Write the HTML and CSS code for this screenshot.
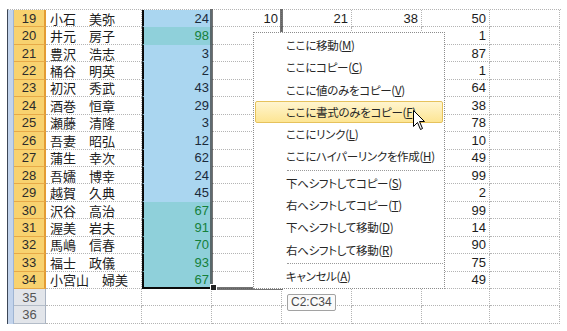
FILE: index.html
```html
<!DOCTYPE html>
<html lang="ja">
<head>
  <meta charset="UTF-8">
  <title>ドラッグ後のメニュー</title>
  <link rel="stylesheet" href="styles.css">
</head>
<body>

  <div class="screen">
    <div class="sheet">
      <div class="row"><div class="strip"></div><div class="rh on">19</div><div class="name">小石　美弥</div><div class="c">24</div><div class="n">10</div><div class="n">21</div><div class="n">38</div><div class="n g">50</div><div class="n"></div></div>
      <div class="row"><div class="strip"></div><div class="rh on">20</div><div class="name">井元　房子</div><div class="c teal">98</div><div class="n"></div><div class="n"></div><div class="n"></div><div class="n g">1</div><div class="n"></div></div>
      <div class="row"><div class="strip"></div><div class="rh on">21</div><div class="name">豊沢　浩志</div><div class="c">3</div><div class="n"></div><div class="n"></div><div class="n"></div><div class="n g">87</div><div class="n"></div></div>
      <div class="row"><div class="strip"></div><div class="rh on">22</div><div class="name">桶谷　明英</div><div class="c">2</div><div class="n"></div><div class="n"></div><div class="n"></div><div class="n g">1</div><div class="n"></div></div>
      <div class="row"><div class="strip"></div><div class="rh on">23</div><div class="name">初沢　秀武</div><div class="c">43</div><div class="n"></div><div class="n"></div><div class="n"></div><div class="n g">64</div><div class="n"></div></div>
      <div class="row"><div class="strip"></div><div class="rh on">24</div><div class="name">酒巻　恒章</div><div class="c">29</div><div class="n"></div><div class="n"></div><div class="n"></div><div class="n g">38</div><div class="n"></div></div>
      <div class="row"><div class="strip"></div><div class="rh on">25</div><div class="name">瀬藤　清隆</div><div class="c">3</div><div class="n"></div><div class="n"></div><div class="n"></div><div class="n g">78</div><div class="n"></div></div>
      <div class="row"><div class="strip"></div><div class="rh on">26</div><div class="name">吾妻　昭弘</div><div class="c">12</div><div class="n"></div><div class="n"></div><div class="n"></div><div class="n g">10</div><div class="n"></div></div>
      <div class="row"><div class="strip"></div><div class="rh on">27</div><div class="name">蒲生　幸次</div><div class="c">62</div><div class="n"></div><div class="n"></div><div class="n"></div><div class="n g">49</div><div class="n"></div></div>
      <div class="row"><div class="strip"></div><div class="rh on">28</div><div class="name">吾嬬　博幸</div><div class="c">24</div><div class="n"></div><div class="n"></div><div class="n"></div><div class="n g">99</div><div class="n"></div></div>
      <div class="row"><div class="strip"></div><div class="rh on">29</div><div class="name">越賀　久典</div><div class="c">45</div><div class="n"></div><div class="n"></div><div class="n"></div><div class="n g">2</div><div class="n"></div></div>
      <div class="row"><div class="strip"></div><div class="rh on">30</div><div class="name">沢谷　高治</div><div class="c teal">67</div><div class="n"></div><div class="n"></div><div class="n"></div><div class="n g">99</div><div class="n"></div></div>
      <div class="row"><div class="strip"></div><div class="rh on">31</div><div class="name">渥美　岩夫</div><div class="c teal">91</div><div class="n"></div><div class="n"></div><div class="n"></div><div class="n g">14</div><div class="n"></div></div>
      <div class="row"><div class="strip"></div><div class="rh on">32</div><div class="name">馬嶋　信春</div><div class="c teal">70</div><div class="n"></div><div class="n"></div><div class="n"></div><div class="n g">90</div><div class="n"></div></div>
      <div class="row"><div class="strip"></div><div class="rh on">33</div><div class="name">福士　政儀</div><div class="c teal">93</div><div class="n"></div><div class="n"></div><div class="n"></div><div class="n g">75</div><div class="n"></div></div>
      <div class="row"><div class="strip"></div><div class="rh on">34</div><div class="name">小宮山　婦美</div><div class="c teal last">67</div><div class="n"></div><div class="n"></div><div class="n"></div><div class="n g">49</div><div class="n"></div></div>
      <div class="row"><div class="strip"></div><div class="rh">35</div><div class="name"></div><div class="n"></div><div class="n"></div><div class="n"></div><div class="n"></div><div class="n g"></div><div class="n"></div></div>
      <div class="row"><div class="strip"></div><div class="rh">36</div><div class="name"></div><div class="n"></div><div class="n"></div><div class="n"></div><div class="n"></div><div class="n g"></div><div class="n"></div></div>
    </div>

    <!-- drag outline of the moved range -->
    <div class="drag-outline"><span class="handle"></span></div>

    <div class="menu">
      <div class="item">ここに移動(<u>M</u>)</div>
      <div class="item">ここにコピー(<u>C</u>)</div>
      <div class="item">ここに値のみをコピー(<u>V</u>)</div>
      <div class="item hot">ここに書式のみをコピー(<u>F</u>)</div>
      <div class="item">ここにリンク(<u>L</u>)</div>
      <div class="item">ここにハイパーリンクを作成(<u>H</u>)</div>
      <div class="sep"></div>
      <div class="item">下へシフトしてコピー(<u>S</u>)</div>
      <div class="item">右へシフトしてコピー(<u>T</u>)</div>
      <div class="item">下へシフトして移動(<u>D</u>)</div>
      <div class="item">右へシフトして移動(<u>R</u>)</div>
      <div class="sep"></div>
      <div class="item">キャンセル(<u>A</u>)</div>
    </div>

    <div class="tip">C2:C34</div>

    <svg class="cursor" width="13" height="21" viewBox="0 0 13 21">
      <path d="M0.5 0.5 L0.5 16.5 L4.5 12.5 L7.5 19.5 L9.5 18.5 L6.5 11.5 L11.5 11.5 Z" fill="#fff" stroke="#000" stroke-width="1"/>
    </svg>
  </div>

</body>
</html>
```

FILE: styles.css
```css
body {
  margin: 0;
  background: #fff;
}

.screen {
  position: relative;
  width: 567px;
  height: 331px;
  overflow: hidden;
  background: #fff;
}

.sheet {
  display: grid;
  grid-template-columns: 6px 32px 96px 70px 70px 70px 70px 68px 70px;
  grid-auto-rows: 17.45px;
  margin: 9px 0 0 7px;
  width: 553px;
  border-left: 1px solid #3c4656;
  border-top: 1px dotted #b4b4b4;
  font-family: "Liberation Sans", Arial, sans-serif;
  font-size: 13px;
  color: #1c1c1c;
}

.row {
  display: contents;
}

.row > div {
  box-sizing: border-box;
  display: flex;
  align-items: center;
  line-height: 15px;
  overflow: hidden;
  white-space: nowrap;
}

.strip {
  background: #c3d4ec;
  border-right: 1px solid #9fb5d3;
}

.rh {
  justify-content: center;
  background: #e2e5ea;
  color: #555;
  border-right: 1px solid #a9b3c2;
  border-bottom: 1px solid #b3bcc8;
}

.rh.on {
  background: #f8d26f;
  color: #2b2b2b;
  border-right: 2px solid #e39c34;
  border-bottom: 1px solid #e7aa48;
}

.name {
  padding-left: 4px;
  font-family: "Noto Sans CJK JP", sans-serif;
  font-size: 13px;
  border-right: 1px dotted #b4b4b4;
  border-bottom: 1px dotted #b4b4b4;
}

.n, .c {
  justify-content: flex-end;
  padding-right: 3px;
  border-right: 1px dotted #b4b4b4;
  border-bottom: 1px dotted #b4b4b4;
}

.c {
  background: #aad6f0;
  color: #1b2a3a;
  border-left: 2px solid #0a0a0a;
  border-bottom-color: #aad6f0;
  border-right: none;
}

.c.teal {
  background: #8fd0da;
  color: #15803a;
  border-bottom-color: #8fd0da;
}

.c.last {
  border-bottom: 2px solid #0a0a0a;
}

.drag-outline {
  position: absolute;
  left: 210px;
  top: 9px;
  width: 73px;
  height: 281px;
  box-sizing: border-box;
  border: 3px solid rgba(70, 70, 70, 0.75);
  border-top: none;
}

.handle {
  position: absolute;
  left: -3px;
  bottom: -4px;
  width: 5px;
  height: 5px;
  background: #222;
  border: 1px solid #fff;
}

.menu {
  position: absolute;
  left: 253px;
  top: 32px;
  width: 192px;
  height: 257px;
  box-sizing: border-box;
  padding: 1px;
  background: #fff;
  border: 1px dotted #8c8c8c;
  font-family: "Noto Sans CJK JP", sans-serif;
  font-size: 11.5px;
  letter-spacing: -0.3px;
  font-feature-settings: "palt";
  color: #262626;
}

.item {
  height: 22.3px;
  line-height: 22px;
  padding-left: 31px;
  box-sizing: border-box;
  white-space: nowrap;
}

.item u {
  text-underline-offset: 1px;
}

.item.hot {
  background: linear-gradient(#fff5cf, #fde593);
  border: 1px solid #e6c25c;
  border-radius: 2px;
  line-height: 20px;
  padding-left: 30px;
}

.sep {
  height: 4px;
  margin-left: 32px;
  border-bottom: 1px dotted #9a9a9a;
  box-sizing: border-box;
  transform: translateY(-1px);
}

.tip {
  position: absolute;
  left: 287px;
  top: 294px;
  padding: 0 3px;
  height: 15px;
  line-height: 14px;
  border: 1px solid #a2a2a2;
  border-radius: 2px;
  background: #fafafa;
  font-family: "Liberation Sans", Arial, sans-serif;
  font-size: 12px;
  color: #4a4a4a;
}

.cursor {
  position: absolute;
  left: 413px;
  top: 110px;
}
```
